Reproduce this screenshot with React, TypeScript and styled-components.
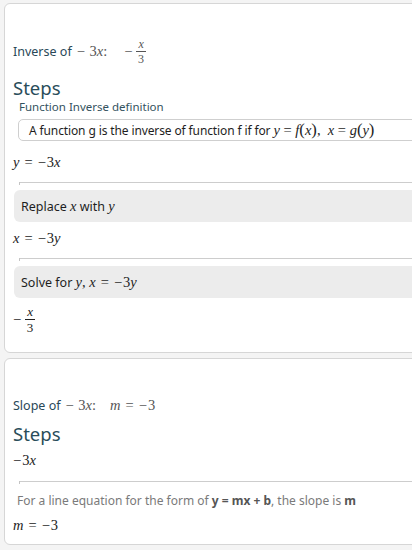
import React from "react";
import styled, { createGlobalStyle } from "styled-components";

const GlobalStyle = createGlobalStyle`
    html, body {
        margin: 0;
        padding: 0;
        background: #f4f4f4;
        overflow: hidden;
    }
    body {
        font-family: "Noto Sans", "Open Sans", sans-serif;
        color: #222;
    }
`;

const Page = styled.div`
    width: 412px;
    height: 550px;
    overflow: hidden;
    padding-top: 3px;
    box-sizing: border-box;
`;

const Card = styled.div<{ $padTop: number; $padBottom: number; $gap?: number }>`
    width: 430px;
    margin-left: 4px;
    margin-top: ${({ $gap }) => $gap ?? 0}px;
    background: #fff;
    border: 1px solid #d6d6d6;
    border-radius: 6px;
    padding: ${({ $padTop, $padBottom }) => `${$padTop}px 0 ${$padBottom}px 8px`};
    display: flex;
    flex-direction: column;
    box-sizing: border-box;
`;

const TitleRow = styled.div`
    height: 24px;
    display: flex;
    align-items: center;
    font-size: 12.5px;
    color: #2a4858;
`;

const Heading = styled.div<{ $mt: number }>`
    height: 22px;
    line-height: 22px;
    margin-top: ${({ $mt }) => $mt}px;
    font-size: 18.5px;
    color: #2a4d5a;
`;

const SectionLabel = styled.div`
    height: 14px;
    line-height: 14px;
    margin-top: 1px;
    margin-left: 6px;
    font-size: 11.5px;
    color: #33525e;
`;

const DefBox = styled.div`
    height: 22px;
    margin-top: 5px;
    margin-left: 5px;
    border: 1px solid #cfcfcf;
    border-radius: 5px;
    box-sizing: border-box;
    padding-left: 10px;
    display: flex;
    align-items: center;
    font-size: 12px;
    letter-spacing: -0.12px;
    color: #1e1e1e;
`;

const MathRow = styled.div<{ $mt: number; $h?: number }>`
    height: ${({ $h }) => $h ?? 22}px;
    margin-top: ${({ $mt }) => $mt}px;
    display: flex;
    align-items: center;
    font-family: "Liberation Serif", "DejaVu Serif", serif;
    font-size: 14.5px;
    color: #222;
    white-space: pre;
`;

// thin rule between steps, with the little tick at its left end
const Divider = styled.div<{ $mt: number }>`
    position: relative;
    margin-top: ${({ $mt }) => $mt}px;
    margin-left: 6px;
    height: 0;
    border-top: 1px solid #cdcdcd;

    &::before {
        content: "";
        position: absolute;
        left: 0;
        top: -1px;
        width: 1px;
        height: 3px;
        background: #c4c4c4;
    }
`;

const StepBox = styled.div`
    height: 32px;
    margin-top: 7px;
    margin-left: 1px;
    border-radius: 6px;
    background: #ececec;
    display: flex;
    align-items: center;
    padding-left: 7px;
    font-size: 12.5px;
    color: #1e1e1e;
`;

const Explain = styled.div`
    height: 20px;
    margin-top: 8px;
    margin-left: 4px;
    display: flex;
    align-items: center;
    font-size: 12px;
    color: #7a7a7a;
    white-space: pre;

    b {
        color: #555;
        font-weight: 700;
    }
`;

const M = styled.span<{ $color?: string; $size?: number }>`
    font-family: "Liberation Serif", "DejaVu Serif", serif;
    font-size: ${({ $size }) => $size ?? 14.5}px;
    color: ${({ $color }) => $color ?? "inherit"};
    letter-spacing: 0;
    white-space: pre;
`;

const V = styled.i`
    font-family: "Liberation Serif", "DejaVu Serif", serif;
    font-style: italic;
`;

const Minus = styled.span`
    margin-right: 1px;
`;

const Op = styled.span`
    margin: 0 5px;
`;

const Paren = styled.span`
    font-size: 1.15em;
    line-height: 1;
`;

const Frac = styled.span<{ $size?: number; $color?: string }>`
    display: inline-flex;
    flex-direction: column;
    align-items: center;
    font-family: "Liberation Serif", "DejaVu Serif", serif;
    font-size: ${({ $size }) => $size ?? 12}px;
    color: ${({ $color }) => $color ?? "inherit"};
    line-height: 1;
    margin-left: 3px;

    span:first-child {
        font-style: italic;
        border-bottom: 1px solid currentColor;
        padding: 0 2px 1px;
    }
    span:last-child {
        padding-top: 1px;
    }
`;

const Spacer = styled.span<{ $w: number }>`
    display: inline-block;
    width: ${({ $w }) => $w}px;
`;

export default function App() {
    return (
        <Page>
            <GlobalStyle />
            <Card $padTop={35} $padBottom={17}>
                <TitleRow>
                    Inverse of
                    <Spacer $w={5} />
                    <M $color="#555">
                        <Minus>−</Minus> 3<V>x</V>:
                    </M>
                    <Spacer $w={17} />
                    <M $color="#555">
                        <Minus>−</Minus>
                    </M>
                    <Frac $size={12} $color="#555">
                        <span>x</span>
                        <span>3</span>
                    </Frac>
                </TitleRow>
                <Heading $mt={14}>Steps</Heading>
                <SectionLabel>Function Inverse definition</SectionLabel>
                <DefBox>
                    A function g is the inverse of function f if for&nbsp;
                    <M>
                        <V>y</V> = <V>f</V>
                        <Paren>(</Paren>
                        <V>x</V>
                        <Paren>)</Paren>,  <V>x</V> = <V>g</V>
                        <Paren>(</Paren>
                        <V>y</V>
                        <Paren>)</Paren>
                    </M>
                </DefBox>
                <MathRow $mt={10}>
                    <V>y</V>
                    <Op>=</Op>
                    <Minus>−</Minus>3<V>x</V>
                </MathRow>
                <Divider $mt={9} />
                <StepBox>
                    Replace&nbsp;<M><V>x</V></M>&nbsp;with&nbsp;<M><V>y</V></M>
                </StepBox>
                <MathRow $mt={5}>
                    <V>x</V>
                    <Op>=</Op>
                    <Minus>−</Minus>3<V>y</V>
                </MathRow>
                <Divider $mt={9} />
                <StepBox>
                    Solve for&nbsp;
                    <M>
                        <V>y</V>, <V>x</V>
                        <Op>=</Op>
                        <Minus>−</Minus>3<V>y</V>
                    </M>
                </StepBox>
                <MathRow $mt={5} $h={32}>
                    <Minus>−</Minus>
                    <Frac $size={13}>
                        <span>x</span>
                        <span>3</span>
                    </Frac>
                </MathRow>
            </Card>
            <Card $padTop={34} $padBottom={8} $gap={5}>
                <TitleRow>
                    Slope of
                    <Spacer $w={5} />
                    <M $color="#555">
                        <Minus>−</Minus> 3<V>x</V>:
                    </M>
                    <Spacer $w={14} />
                    <M $color="#555">
                        <V>m</V>
                        <Op>=</Op>
                        <Minus>−</Minus>3
                    </M>
                </TitleRow>
                <Heading $mt={6}>Steps</Heading>
                <MathRow $mt={4}>
                    <Minus>−</Minus>3<V>x</V>
                </MathRow>
                <Divider $mt={10} />
                <Explain>
                    For a line equation for the form of <b>y = mx + b</b>, the slope is <b>m</b>
                </Explain>
                <MathRow $mt={4}>
                    <V>m</V>
                    <Op>=</Op>
                    <Minus>−</Minus>3
                </MathRow>
            </Card>
        </Page>
    );
}
